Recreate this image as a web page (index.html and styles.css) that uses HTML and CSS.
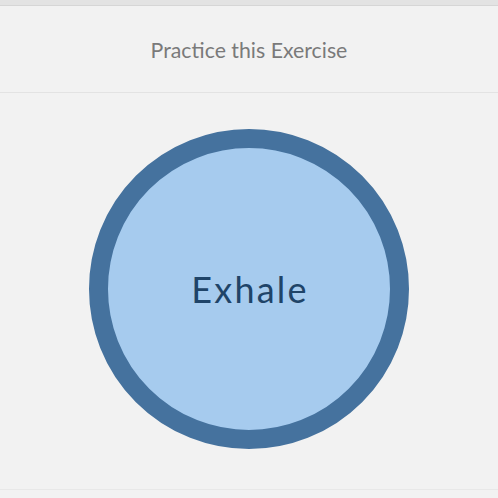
FILE: index.html
```html
<!DOCTYPE html>
<html>
<head>
<meta charset="utf-8">
<link rel="stylesheet" href="styles.css">
</head>
<body>
<div class="topband"></div>
<header class="header">Practice this Exercise</header>
<main class="stage">
  <div class="circle"><span class="label">Exhale</span></div>
</main>
<div class="footer"></div>
</body>
</html>
```
FILE: styles.css
```css
html, body {
  margin: 0;
  padding: 0;
  background: #f2f2f2;
  width: 498px;
  height: 498px;
  overflow: hidden;
}
body {
  display: flex;
  flex-direction: column;
  font-family: Lato, "Open Sans", sans-serif;
}
.topband {
  height: 5px;
  background: #e3e3e3;
  border-bottom: 1px solid #d6d6d6;
}
.header {
  height: 87px;
  border-bottom: 1px solid #e3e3e3;
  display: flex;
  align-items: center;
  justify-content: center;
  font-size: 21.3px;
  color: #7a7a7a;
  padding-top: 1px;
  box-sizing: border-box;
}
.stage {
  height: 397px;
  display: flex;
  justify-content: center;
  align-items: flex-start;
  padding-top: 36px;
  box-sizing: border-box;
  border-bottom: 1px solid #e8e8e8;
}
.circle {
  width: 320px;
  height: 320px;
  box-sizing: border-box;
  border-radius: 50%;
  border: 19px solid #45729e;
  background: #a6cbee;
  display: flex;
  align-items: center;
  justify-content: center;
}
.label {
  font-family: Lato, "Open Sans", sans-serif;
  font-size: 36px;
  letter-spacing: 2.2px;
  color: #1f4468;
  margin-left: 2px;
}
.footer {
  flex: 1;
}
```
